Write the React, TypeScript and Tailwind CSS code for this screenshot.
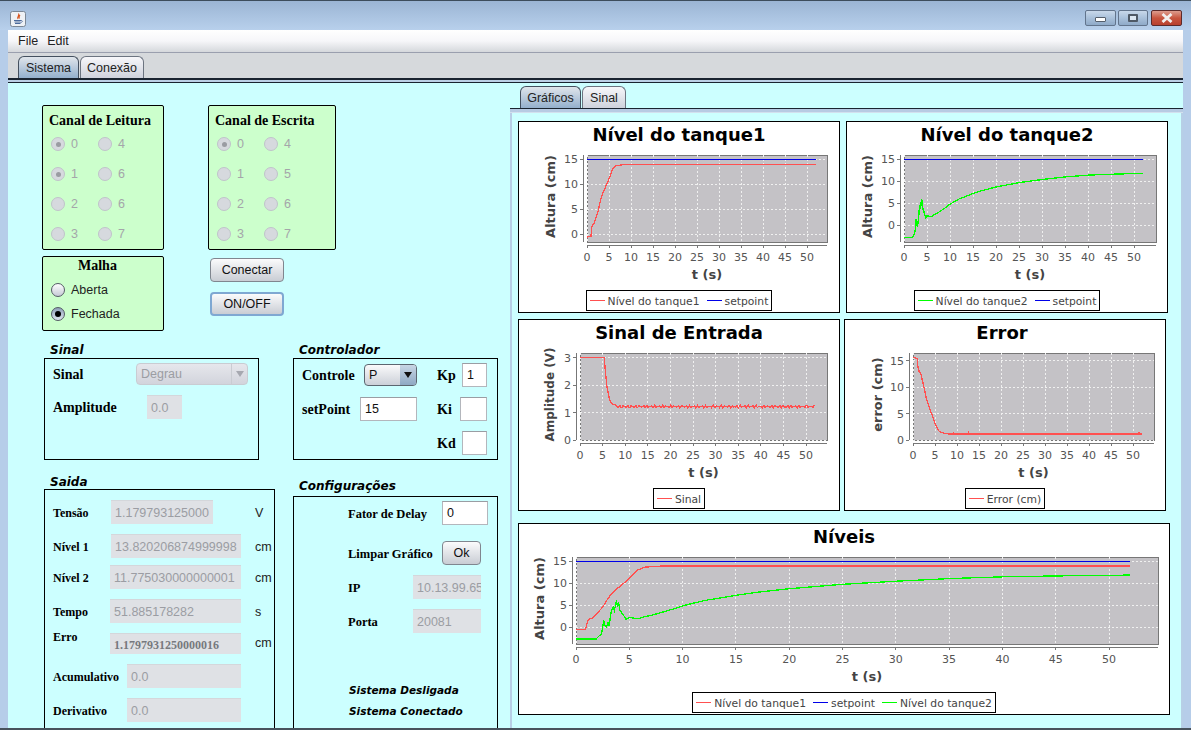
import React from 'react';

const cyan = 'bg-[#ccffff]';
const serifBold = "font-['Liberation_Serif',serif] font-bold text-black";
const headingFont = "font-['DejaVu_Sans',sans-serif] font-bold italic text-black";

type Pt = [number, number];

const level1: Pt[] = [[0, -0.6], [0.9, -0.5], [1, 0.5], [1.1, 1.5], [1.3, 1.9], [1.6, 2.1], [2, 3.2], [2.5, 4.5], [3, 6.5], [3.5, 8], [4, 9], [5, 11], [5.8, 13], [6.5, 13.6], [7, 13.7], [8, 13.85], [52, 13.85]];
const level2: Pt[] = [[0, -2.7], [1.9, -2.7], [2.1, -2.2], [2.4, -1.5], [2.5, 0], [2.6, 1.5], [2.7, 0.3], [2.85, 0], [3, 1], [3.1, 0.2], [3.3, 3.5], [3.5, 4.5], [3.6, 3.8], [3.8, 6], [3.9, 4.5], [4, 5.7], [4.1, 3.8], [4.3, 3.2], [4.5, 2.5], [4.7, 1.7], [5, 2.2], [5.5, 2], [6, 2], [6.5, 2.4], [7, 2.6], [8, 3.3], [9, 4], [10, 4.8], [12, 6], [14, 6.8], [15, 7.2], [17, 7.9], [20, 8.7], [25, 9.7], [30, 10.4], [35, 11], [40, 11.4], [45, 11.6], [48, 11.7], [52, 11.8]];
const setpoint: Pt[] = [[0, 15], [52, 15]];
const errorCurve: Pt[] = [[0, 15.7], [0.5, 15.6], [1, 15.4], [1.1, 14], [1.4, 13], [1.8, 12.5], [2.5, 10], [3, 8], [4, 5.5], [5, 3.2], [5.5, 2.2], [6, 1.6], [7, 1.3], [8, 1.15], [9.2, 1.15], [9.3, 1.35], [9.4, 1.15], [12.5, 1.15], [12.6, 1.35], [12.7, 1.15], [51.3, 1.15], [51.4, 1.4], [51.5, 1.15], [52, 1.15]];

const signal: Pt[] = [[0, 3], [5.4, 3], [5.6, 2.5], [6, 1.9], [6.5, 1.5], [7, 1.32], [8, 1.27]];
for (let t = 8.2; t < 52; t += 0.22) {
  signal.push([t, 1.22 + 0.03 * Math.sin(t * 7.3) + 0.025 * Math.sin(t * 17.9)]);
}

const RED = '#ff5050';
const BLUE = '#0000e8';
const GREEN = '#00ff00';
const tSteps = [0, 5, 10, 15, 20, 25, 30, 35, 40, 45, 50];

type ChartProps = {
  bx: number;
  by: number;
  w: number;
  title: string;
  titlePr?: number;
  ylabel: string;
  ylabelX: number;
  ylabelSize?: number;
  l: number;
  r: number;
  t: number;
  b: number;
  tPx: number;
  y0: number;
  vPx: number;
  yTicks: number[];
  series: { color: string; pts: Pt[] }[];
  legend: { color: string; name: string }[];
};

function Chart(p: ChartProps) {
  const svgTop = p.by + 29;
  const X = (v: number) => p.l - p.bx - 1 + v;
  const Y = (v: number) => v - svgTop;
  const xOf = (t: number) => X(t * p.tPx);
  const yOf = (v: number) => Y(p.y0 - v * p.vPx);
  const plotL = X(0);
  const plotR = p.r - p.bx - 1;
  const plotT = Y(p.t);
  const plotB = Y(p.b);
  const axisX = plotL - 4;
  const axisY = plotB + 3;
  const centerX = (plotL + plotR) / 2;
  return (
    <div className="flex h-[192px] shrink-0 flex-col border border-black bg-white" style={{ width: p.w }}>
      <div
        className="h-[28px] text-center font-['DejaVu_Sans',sans-serif] text-[18px] font-bold leading-[26px] text-black"
        style={{ paddingRight: p.titlePr ?? 0 }}
      >
        {p.title}
      </div>
      <svg width={p.w - 2} height={137} className="block overflow-visible font-['DejaVu_Sans',sans-serif]">
        <rect x={plotL} y={plotT} width={plotR - plotL} height={plotB - plotT} fill="#c4c2c6" stroke="#777777" shapeRendering="crispEdges" />
        {tSteps.map((s) => (
          <line key={s} x1={xOf(s)} x2={xOf(s)} y1={plotT} y2={plotB} stroke="#f0f0f0" strokeDasharray="2 2" shapeRendering="crispEdges" />
        ))}
        {p.yTicks.map((v) => (
          <line key={v} x1={plotL} x2={plotR} y1={yOf(v)} y2={yOf(v)} stroke="#f0f0f0" strokeDasharray="2 2" shapeRendering="crispEdges" />
        ))}
        <line x1={axisX} x2={axisX} y1={plotT} y2={plotB} stroke="#777777" shapeRendering="crispEdges" />
        <line x1={plotL} x2={plotR} y1={axisY} y2={axisY} stroke="#777777" shapeRendering="crispEdges" />
        {p.yTicks.map((v) => (
          <g key={v}>
            <line x1={axisX - 3} x2={axisX} y1={yOf(v)} y2={yOf(v)} stroke="#777777" shapeRendering="crispEdges" />
            <text x={axisX - 5} y={yOf(v) + 4} textAnchor="end" fontSize="11" fill="#555555">{v}</text>
          </g>
        ))}
        {tSteps.map((s) => (
          <g key={s}>
            <line x1={xOf(s)} x2={xOf(s)} y1={axisY} y2={axisY + 3} stroke="#777777" shapeRendering="crispEdges" />
            <text x={xOf(s)} y={axisY + 16} textAnchor="middle" fontSize="11" fill="#555555">{s}</text>
          </g>
        ))}
        <text x={centerX} y={axisY + 34} textAnchor="middle" fontSize="13" fontWeight="bold" fill="#444444">t (s)</text>
        <text
          transform={`translate(${p.ylabelX - p.bx - 1 + 4} ${(plotT + plotB) / 2 - 2}) rotate(-90)`}
          textAnchor="middle"
          fontSize={p.ylabelSize ?? 13}
          fontWeight="bold"
          fill="#444444"
        >
          {p.ylabel}
        </text>
        {p.series.map((s, i) => (
          <polyline
            key={i}
            fill="none"
            stroke={s.color}
            strokeWidth={s.pts === setpoint ? 1 : 1.3}
            shapeRendering="crispEdges"
            points={s.pts.map(([t, v]) => `${xOf(t)},${yOf(v)}`).join(' ')}
          />
        ))}
      </svg>
      <div className="mt-[3px] flex h-[21px] items-center gap-[7px] self-center border border-black px-[3px] font-['DejaVu_Sans',sans-serif] text-[10.75px] text-[#444444]">
        {p.legend.map((it) => (
          <div key={it.name} className="flex h-[19px] items-center gap-[3px] whitespace-nowrap">
            <span className="h-px w-[15px]" style={{ backgroundColor: it.color }} />
            <span className="h-[19px] pt-[2px] leading-[17px]">{it.name}</span>
          </div>
        ))}
      </div>
    </div>
  );
}

function Radio({ label, checked, disabled }: { label: string; checked?: boolean; disabled?: boolean }) {
  return (
    <div className={`flex h-[14px] items-center gap-[6px] text-[12.5px] ${disabled ? 'text-[#a4a6aa]' : 'text-[#222222]'}`}>
      {disabled ? (
        <span className="flex h-[14px] w-[14px] items-center justify-center rounded-full border border-[#c0c4ca] bg-[#d6d9de]">
          {checked && <span className="h-[5px] w-[5px] rounded-full bg-[#9a9ca2]" />}
        </span>
      ) : (
        <span
          className={`flex h-[14px] w-[14px] items-center justify-center rounded-full border border-[#555b66] ${
            checked ? 'bg-gradient-to-b from-[#8fa0b8] to-[#dfe6ef]' : 'bg-gradient-to-b from-[#ffffff] to-[#c6cad6]'
          }`}
        >
          {checked && <span className="h-[6px] w-[6px] rounded-full bg-black" />}
        </span>
      )}
      <span>{label}</span>
    </div>
  );
}

function ChannelBox({ title, width, rows }: { title: string; width: string; rows: [string, string][]; }) {
  return (
    <div className={`h-[145px] rounded-[2px] border border-black bg-[#ccffcc] ${width}`}>
      <div className={`${serifBold} h-[16px] pl-[6px] mt-[6px] text-[14px] leading-[18px] whitespace-nowrap`}>{title}</div>
      <div className="mt-[9px] grid grid-cols-[47px_47px] gap-y-[16px] pl-[8px]">
        {rows.map(([a, b], i) => (
          <React.Fragment key={i}>
            <Radio label={a} disabled checked={title === 'Canal de Leitura' ? i < 2 : i === 0} />
            <Radio label={b} disabled />
          </React.Fragment>
        ))}
      </div>
    </div>
  );
}

function Button({ label, className, focus }: { label: string; className: string; focus?: boolean }) {
  return (
    <div
      className={`flex h-[24px] items-center justify-center rounded-[4px] bg-gradient-to-b from-[#fbfbfc] to-[#c9cdd4] text-[12.5px] text-[#111111] ${
        focus ? 'border-2 border-[#7fa8d2]' : 'border border-[#80868f]'
      } ${className}`}
    >
      {label}
    </div>
  );
}

function Field({ value, className, disabled, bold }: { value: string; className: string; disabled?: boolean; bold?: boolean }) {
  return (
    <div
      className={`flex shrink-0 items-center overflow-hidden whitespace-nowrap pt-px ${
        disabled
          ? 'border-t border-[#d4d7db] bg-[#dfe1e5] pl-[4px] text-[#9b9da3]'
          : 'border border-[#b3b6bc] border-t-[#9a9da3] bg-white pl-[4px] text-[#111111]'
      } ${bold ? "font-['Liberation_Serif',serif] text-[12px] font-bold text-[#77797e]" : 'text-[12.5px]'} ${className}`}
    >
      {value}
    </div>
  );
}

function Tab({ label, active, className }: { label: string; active?: boolean; className: string }) {
  return (
    <div
      className={`flex h-[22px] items-center justify-center rounded-t-[6px] border border-b-0 pt-px text-[12.5px] text-[#222222] ${
        active
          ? 'border-[#44505f] bg-gradient-to-b from-[#e0e5eb] to-[#94b0cc]'
          : 'border-[#6c7480] bg-gradient-to-b from-[#f7f7fa] to-[#cfd2dc]'
      } ${className}`}
    >
      {label}
    </div>
  );
}

function WinButton({ children, close, className }: { children: React.ReactNode; close?: boolean; className: string }) {
  return (
    <div
      className={`flex h-[16px] items-center justify-center rounded-[2px] border ${
        close
          ? 'border-[#5c2a2a] bg-gradient-to-b from-[#dc9c8e] via-[#c8553f] to-[#b8402e]'
          : 'border-[#62748c] bg-gradient-to-b from-[#c8d8ea] via-[#a9c0da] to-[#8faac8]'
      } ${className}`}
    >
      {children}
    </div>
  );
}

function JavaIcon() {
  return (
    <svg width="16" height="16" viewBox="0 0 16 16" className="block">
      <rect x="0.5" y="0.5" width="15" height="15" rx="2" fill="#eef1f5" stroke="#7b8795" />
      <path d="M8.5 2.5C10 4.5 6.5 5.5 8 8M10 4C9 5 8.5 6 9.5 7.5" fill="none" stroke="#d8541e" strokeWidth="1.1" />
      <path d="M4 9.5h7M4.5 11h6M5 12.5h5.5" fill="none" stroke="#4b6a9c" strokeWidth="1" />
      <path d="M11 9.5c2 0 2 1.8-.5 2" fill="none" stroke="#4b6a9c" strokeWidth="0.8" />
    </svg>
  );
}

function OutRow({ label, labelW, value, fieldW, unit, className = '' }: { label: string; labelW: string; value: string; fieldW: string; unit?: string; className?: string }) {
  return (
    <div className={`flex h-[24px] items-center ${className}`}>
      <span className={`${serifBold} ${labelW} pt-[2px] text-[12px]`}>{label}</span>
      <Field value={value} disabled className={`h-[24px] ${fieldW}`} />
      {unit && <span className="ml-auto w-[19px] pt-[2px] text-[12.5px] text-[#222222]">{unit}</span>}
    </div>
  );
}

function LeftPanel() {
  return (
    <div className={`w-[502px] shrink-0 overflow-hidden ${cyan}`}>
      <div className="ml-[34px] mt-[22px] flex gap-[44px]">
        <div className="w-[122px]">
          <ChannelBox
            title="Canal de Leitura"
            width="w-[122px]"
            rows={[['0', '4'], ['1', '6'], ['2', '6'], ['3', '7']]}
          />
          <div className="mt-[6px] h-[75px] rounded-[2px] border border-black bg-[#ccffcc]">
            <div className={`${serifBold} h-[16px] pl-[35px] text-[14px] leading-[18px]`}>Malha</div>
            <div className="mt-[10px] flex flex-col gap-[10px] pl-[8px]">
              <Radio label="Aberta" />
              <Radio label="Fechada" checked />
            </div>
          </div>
        </div>
        <div className="w-[128px]">
          <ChannelBox
            title="Canal de Escrita"
            width="w-[128px]"
            rows={[['0', '4'], ['1', '5'], ['2', '6'], ['3', '7']]}
          />
          <Button label="Conectar" className="ml-[2px] mt-[8px] w-[74px]" />
          <Button label="ON/OFF" focus className="ml-[2px] mt-[10px] w-[74px]" />
        </div>
      </div>

      <div className="ml-[36px] flex gap-[34px]">
        <div className="w-[215px]">
          <div className={`${headingFont} ml-[6px] mt-[11px] h-[14px] text-[12px] leading-[16px]`}>Sinal</div>
          <div className="mt-[2px] h-[102px] border border-black pl-[8px] pt-[4px]">
            <div className="flex items-center">
              <span className={`${serifBold} w-[83px] text-[14px]`}>Sinal</span>
              <div className="flex h-[22px] w-[112px] items-center justify-between rounded-[4px] border border-[#c9ccd2] bg-gradient-to-b from-[#e6e7ec] to-[#d2d4dc] pl-[4px] text-[12.5px] text-[#9b9da3]">
                <span>Degrau</span>
                <span className="flex h-full w-[16px] items-center justify-center border-l border-[#c9ccd2]">
                  <span className="h-0 w-0 border-x-[4px] border-t-[6px] border-x-transparent border-t-[#a6a8b0]" />
                </span>
              </div>
            </div>
            <div className="mt-[10px] flex items-center">
              <span className={`${serifBold} w-[94px] text-[14px]`}>Amplitude</span>
              <Field value="0.0" disabled className="h-[24px] w-[35px]" />
            </div>
          </div>
        </div>
        <div className="w-[205px]">
          <div className={`${headingFont} ml-[6px] mt-[11px] h-[14px] text-[12px] leading-[16px]`}>Controlador</div>
          <div className="mt-[2px] h-[102px] border border-black pl-[8px] pt-[4px]">
            <div className="flex items-center">
              <span className={`${serifBold} w-[62px] text-[14px]`}>Controle</span>
              <div className="flex h-[22px] w-[53px] items-center justify-between overflow-hidden rounded-[4px] border border-[#5c6670] bg-gradient-to-b from-[#fafafb] to-[#ccd0d8] pl-[4px] text-[12.5px] text-[#111111]">
                <span>P</span>
                <span className="flex h-full w-[16px] items-center justify-center bg-gradient-to-b from-[#c8d6e4] to-[#8fa9c4]">
                  <span className="h-0 w-0 border-x-[4px] border-t-[6px] border-x-transparent border-t-[#111111]" />
                </span>
              </div>
              <span className={`${serifBold} ml-[20px] w-[25px] text-[14px]`}>Kp</span>
              <Field value="1" className="h-[24px] w-[25px]" />
            </div>
            <div className="mt-[10px] flex items-center">
              <span className={`${serifBold} w-[58px] text-[14px]`}>setPoint</span>
              <Field value="15" className="h-[24px] w-[57px]" />
              <span className={`${serifBold} ml-[20px] w-[23px] text-[14px]`}>Ki</span>
              <Field value="" className="h-[24px] w-[27px]" />
            </div>
            <div className="ml-[135px] mt-[10px] flex items-center">
              <span className={`${serifBold} w-[25px] text-[14px]`}>Kd</span>
              <Field value="" className="h-[24px] w-[25px]" />
            </div>
          </div>
        </div>
      </div>

      <div className="ml-[36px] flex gap-[18px]">
        <div className="w-[231px]">
          <div className={`${headingFont} ml-[6px] mt-[14px] h-[14px] text-[12px] leading-[16px]`}>Saida</div>
          <div className="mt-px h-[260px] border border-black pl-[8px] pt-[10px]">
            <OutRow label="Tensão" labelW="w-[58px]" value="1.179793125000" fieldW="w-[102px]" unit="V" />
            <OutRow label="Nível 1" labelW="w-[58px]" value="13.820206874999998" fieldW="w-[130px]" unit="cm" className="mt-[10px]" />
            <OutRow label="Nível 2" labelW="w-[57px]" value="11.775030000000001" fieldW="w-[131px]" unit="cm" className="mt-[7px]" />
            <OutRow label="Tempo" labelW="w-[57px]" value="51.885178282" fieldW="w-[131px]" unit="s" className="mt-[10px]" />
            <div className="mt-[10px] flex h-[21px]">
              <span className={`${serifBold} -mt-[2px] w-[57px] text-[12px] leading-[12px]`}>Erro</span>
              <Field value="1.1797931250000016" bold disabled className="h-[21px] w-[131px]" />
              <span className="ml-auto flex w-[19px] items-center text-[12.5px] text-[#222222]">cm</span>
            </div>
            <OutRow label="Acumulativo" labelW="w-[74px]" value="0.0" fieldW="w-[114px]" className="mt-[10px]" />
            <OutRow label="Derivativo" labelW="w-[74px]" value="0.0" fieldW="w-[114px]" className="mt-[10px]" />
          </div>
        </div>
        <div className="w-[205px]">
          <div className={`${headingFont} ml-[6px] mt-[18px] h-[14px] text-[12px] leading-[16px]`}>Configurações</div>
          <div className="mt-[4px] h-[260px] border border-black pl-[54px] pt-[4px]">
            <div className="flex items-center">
              <span className={`${serifBold} w-[94px] pt-[2px] text-[12.5px]`}>Fator de Delay</span>
              <Field value="0" className="h-[24px] w-[46px]" />
            </div>
            <div className="mt-[16px] flex items-center">
              <span className={`${serifBold} w-[94px] pt-[2px] text-[12.5px]`}>Limpar Gráfico</span>
              <Button label="Ok" className="w-[39px]" />
            </div>
            <div className="mt-[10px] flex items-center">
              <span className={`${serifBold} w-[65px] pt-[2px] text-[12.5px]`}>IP</span>
              <Field value="10.13.99.65" disabled className="h-[24px] w-[68px]" />
            </div>
            <div className="mt-[10px] flex items-center">
              <span className={`${serifBold} w-[65px] pt-[2px] text-[12.5px]`}>Porta</span>
              <Field value="20081" disabled className="h-[24px] w-[68px]" />
            </div>
            <div className={`${headingFont} ml-px mt-[48px] h-[16px] text-[10.5px] leading-[18px] whitespace-nowrap`}>Sistema Desligada</div>
            <div className={`${headingFont} ml-px mt-[5px] h-[16px] text-[10.5px] leading-[18px] whitespace-nowrap`}>Sistema Conectado</div>
          </div>
        </div>
      </div>
    </div>
  );
}

function RightPanel() {
  return (
    <div className={`flex min-w-0 flex-1 flex-col ${cyan}`}>
      <div className="flex h-[25px] shrink-0 items-end gap-px pl-[10px]">
        <Tab label="Gráficos" active className="w-[61px]" />
        <Tab label="Sinal" className="w-[44px]" />
      </div>
      <div className="h-[5px] shrink-0 border-y border-t-[#1a2430] border-b-[#d3e0ee] bg-[#b7cbe3]" />
      <div className="flex-1 overflow-hidden border-x-2 border-[#b7cfe6] pl-[6px] pt-[8px]">
        <div className="flex gap-[6px]">
          <Chart
            bx={518} by={121} w={322} title="Nível do tanque1" ylabel="Altura (cm)" ylabelX={551}
            l={587} r={827} t={155} b={242} tPx={4.4} y0={234} vPx={5} yTicks={[0, 5, 10, 15]}
            series={[{ color: BLUE, pts: setpoint }, { color: RED, pts: level1 }]}
            legend={[{ color: RED, name: 'Nível do tanque1' }, { color: BLUE, name: 'setpoint' }]}
          />
          <Chart
            bx={846} by={121} w={322} title="Nível do tanque2" ylabel="Altura (cm)" ylabelX={868}
            l={904} r={1156} t={155} b={242} tPx={4.6} y0={225.3} vPx={4.4} yTicks={[0, 5, 10, 15]}
            series={[{ color: BLUE, pts: setpoint }, { color: GREEN, pts: level2 }]}
            legend={[{ color: GREEN, name: 'Nível do tanque2' }, { color: BLUE, name: 'setpoint' }]}
          />
        </div>
        <div className="mt-[6px] flex gap-[4px]">
          <Chart
            bx={518} by={319} w={322} title="Sinal de Entrada" ylabel="Amplitude (V)" ylabelX={550} ylabelSize={12}
            l={580} r={827} t={353} b={440} tPx={4.52} y0={440} vPx={27.4} yTicks={[0, 1, 2, 3]}
            series={[{ color: RED, pts: signal }]}
            legend={[{ color: RED, name: 'Sinal' }]}
          />
          <Chart
            bx={844} by={319} w={322} title="Error" titlePr={6} ylabel="error (cm)" ylabelX={878}
            l={913} r={1154} t={353} b={440} tPx={4.4} y0={440} vPx={5.27} yTicks={[0, 5, 10, 15]}
            series={[{ color: RED, pts: errorCurve }]}
            legend={[{ color: RED, name: 'Error (cm)' }]}
          />
        </div>
        <div className="mt-[12px]">
          <Chart
            bx={518} by={523} w={652} title="Níveis" ylabel="Altura (cm)" ylabelX={540}
            l={576} r={1158} t={557} b={644} tPx={10.66} y0={627} vPx={4.4} yTicks={[0, 5, 10, 15]}
            series={[{ color: BLUE, pts: setpoint }, { color: RED, pts: level1 }, { color: GREEN, pts: level2 }]}
            legend={[{ color: RED, name: 'Nível do tanque1' }, { color: BLUE, name: 'setpoint' }, { color: GREEN, name: 'Nível do tanque2' }]}
          />
        </div>
      </div>
    </div>
  );
}

export default function App() {
  return (
    <div className="flex h-[730px] w-[1191px] flex-col overflow-hidden border-b-2 border-t border-b-[#47525c] border-t-[#3d4d5c] bg-[#b6cde9] font-['Liberation_Sans',sans-serif]">
      <div className="flex h-[29px] shrink-0 items-start justify-between bg-gradient-to-b from-[#9bb5d4] to-[#b8d0ec] pl-[10px] pr-[9px]">
        <div className="mt-[10px]">
          <JavaIcon />
        </div>
        <div className="mt-[9px] flex gap-[2px]">
          <WinButton className="w-[31px]">
            <span className="mt-[3px] h-[5px] w-[11px] rounded-[1px] border border-[#555f6c] bg-white" />
          </WinButton>
          <WinButton className="w-[30px]">
            <span className="h-[8px] w-[10px] rounded-[1px] border-2 border-[#4f5966] bg-[#dbe6f1]" />
          </WinButton>
          <WinButton close className="ml-px w-[31px]">
            <svg width="12" height="10" viewBox="0 0 12 10">
              <path d="M1.5 1 10.5 9M10.5 1 1.5 9" stroke="#f2efee" strokeWidth="2.8" />
            </svg>
          </WinButton>
        </div>
      </div>
      <div className="mx-[8px] flex min-h-0 flex-1 flex-col">
        <div className="flex h-[23px] shrink-0 items-center gap-[9px] border-b border-[#9a9fae] bg-gradient-to-b from-[#ffffff] via-[#f6f6f9] to-[#d5d8dc] pl-[10px] pt-px text-[12.5px] text-[#222222]">
          <span>File</span>
          <span>Edit</span>
        </div>
        <div className="flex h-[25px] shrink-0 items-end gap-px bg-[#d6d9dc] pl-[10px]">
          <Tab label="Sistema" active className="w-[61px]" />
          <Tab label="Conexão" className="w-[64px]" />
        </div>
        <div className="h-[5px] shrink-0 border-b border-t-2 border-b-[#1a2430] border-t-[#1a2430] bg-[#bcd0e6]" />
        <div className="flex min-h-0 flex-1 overflow-hidden">
          <LeftPanel />
          <RightPanel />
        </div>
      </div>
    </div>
  );
}
